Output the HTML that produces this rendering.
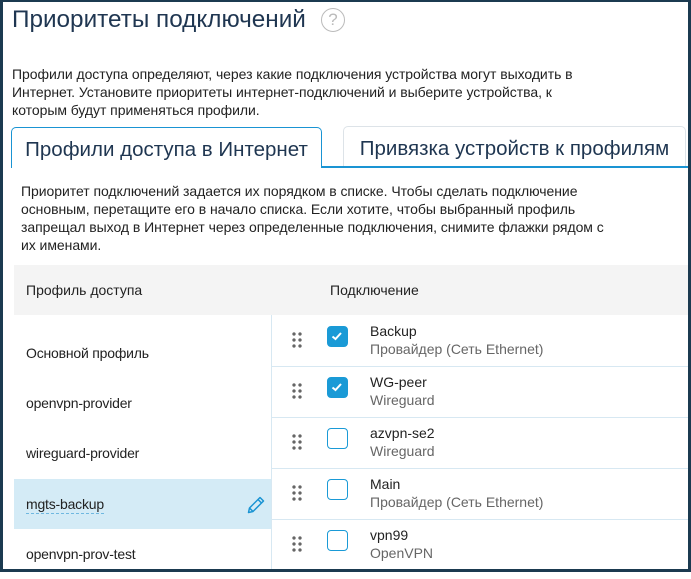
<!DOCTYPE html>
<html><head><meta charset="utf-8"><style>
*{margin:0;padding:0;box-sizing:border-box}
body{width:691px;height:572px;overflow:hidden;background:#fff;font-family:"Liberation Sans",sans-serif;color:#222;position:relative}
.frame{position:absolute;inset:0;border:solid #1b3a50;border-width:2px 3px 3px 3px;pointer-events:none;z-index:10}
.a{position:absolute;white-space:nowrap}
.t{font-size:14px;line-height:18px;letter-spacing:-0.05px}
.row{position:absolute;left:14px;width:257px;height:50px;font-size:14px;line-height:50px;padding-left:12px;letter-spacing:-0.2px}
.rr{position:absolute;left:272px;width:416px;height:51px;border-bottom:1px solid #d7e8f2}
.dots{position:absolute;left:19px;top:15px;width:12px;height:18px;background:radial-gradient(circle,#666 1.5px,transparent 1.9px) 0 0/6px 6px}
.cb{position:absolute;left:55px;top:10px;width:21px;height:21px;border:1.6px solid #1a9ad6;border-radius:4px}
.cb.on{background:#1a9ad6}
.n{position:absolute;left:98px;top:6px;font-size:14px;line-height:18px;color:#222}
.s{position:absolute;left:98px;top:24px;font-size:14px;line-height:18px;color:#666}
</style></head><body>
<div class="frame"></div>
<div class="a" style="left:12px;top:4px;font-size:24.3px;line-height:32px;color:#1f3651;letter-spacing:0px">Приоритеты подключений</div>
<div class="a" style="left:321px;top:8px;width:24px;height:24px;border:1.3px solid #bbb;border-radius:50%;color:#bbb;font-size:17px;line-height:22px;text-align:center">?</div>
<div class="a t" style="left:12px;top:65px">Профили доступа определяют, через какие подключения устройства могут выходить в<br>Интернет. Установите приоритеты интернет-подключений и выберите устройства, к<br>которым будут применяться профили.</div>
<div class="a" style="left:321px;top:166px;width:367px;height:1.5px;background:#1a94d3"></div>
<div class="a" style="left:11px;top:127px;width:311px;height:41px;border:1.3px solid #1a94d3;border-bottom:none;border-radius:5px 5px 0 0;background:#fff;font-size:20.5px;line-height:44px;text-align:center;color:#1f3651">Профили доступа в Интернет</div>
<div class="a" style="left:343px;top:126px;width:343px;height:40px;border:1px solid #dde3e8;border-bottom:none;border-radius:5px 5px 0 0;font-size:20.5px;line-height:44px;text-align:center;color:#1f3651">Привязка устройств к профилям</div>
<div class="a t" style="left:21px;top:182px">Приоритет подключений задается их порядком в списке. Чтобы сделать подключение<br>основным, перетащите его в начало списка. Если хотите, чтобы выбранный профиль<br>запрещал выход в Интернет через определенные подключения, снимите флажки рядом с<br>их именами.</div>
<div class="a" style="left:14px;top:265px;width:674px;height:50px;background:#f4f4f4"></div>
<div class="a" style="left:26px;top:282px;font-size:14px">Профиль доступа</div>
<div class="a" style="left:330px;top:282px;font-size:14px">Подключение</div>
<div class="a" style="left:271px;top:315px;width:1px;height:257px;background:#d7e8f2"></div>
<div class="row" style="top:328px">Основной профиль</div>
<div class="row" style="top:378px">openvpn-provider</div>
<div class="row" style="top:428px">wireguard-provider</div>
<div class="row" style="top:479px;background:#d4ebf6"><span style="border-bottom:1px dashed #6fb8e0;line-height:18px;display:inline-block">mgts-backup</span>
<svg style="position:absolute;left:232px;top:16px" width="20" height="20" viewBox="0 0 20 20"><path d="M2.5 17.5 L3.5 13 L14 2.5 L17.5 6 L7 16.5 Z M12 4.5 L15.5 8 M3.5 13 L7 16.5" fill="none" stroke="#1a94d3" stroke-width="1.5" stroke-linejoin="round"/></svg></div>
<div class="row" style="top:529px">openvpn-prov-test</div>
<div class="rr" style="top:316px"><div class="dots"></div><div class="cb on"><svg width="18" height="18" viewBox="0 0 18 18"><path d="M4.5 9.5 L7.5 12 L13 6" fill="none" stroke="#fff" stroke-width="2"/></svg></div><div class="n">Backup</div><div class="s">Провайдер (Сеть Ethernet)</div></div>
<div class="rr" style="top:367px"><div class="dots"></div><div class="cb on"><svg width="18" height="18" viewBox="0 0 18 18"><path d="M4.5 9.5 L7.5 12 L13 6" fill="none" stroke="#fff" stroke-width="2"/></svg></div><div class="n">WG-peer</div><div class="s">Wireguard</div></div>
<div class="rr" style="top:418px"><div class="dots"></div><div class="cb"></div><div class="n">azvpn-se2</div><div class="s">Wireguard</div></div>
<div class="rr" style="top:469px"><div class="dots"></div><div class="cb"></div><div class="n">Main</div><div class="s">Провайдер (Сеть Ethernet)</div></div>
<div class="rr" style="top:520px"><div class="dots"></div><div class="cb"></div><div class="n">vpn99</div><div class="s">OpenVPN</div></div>
</body></html>
